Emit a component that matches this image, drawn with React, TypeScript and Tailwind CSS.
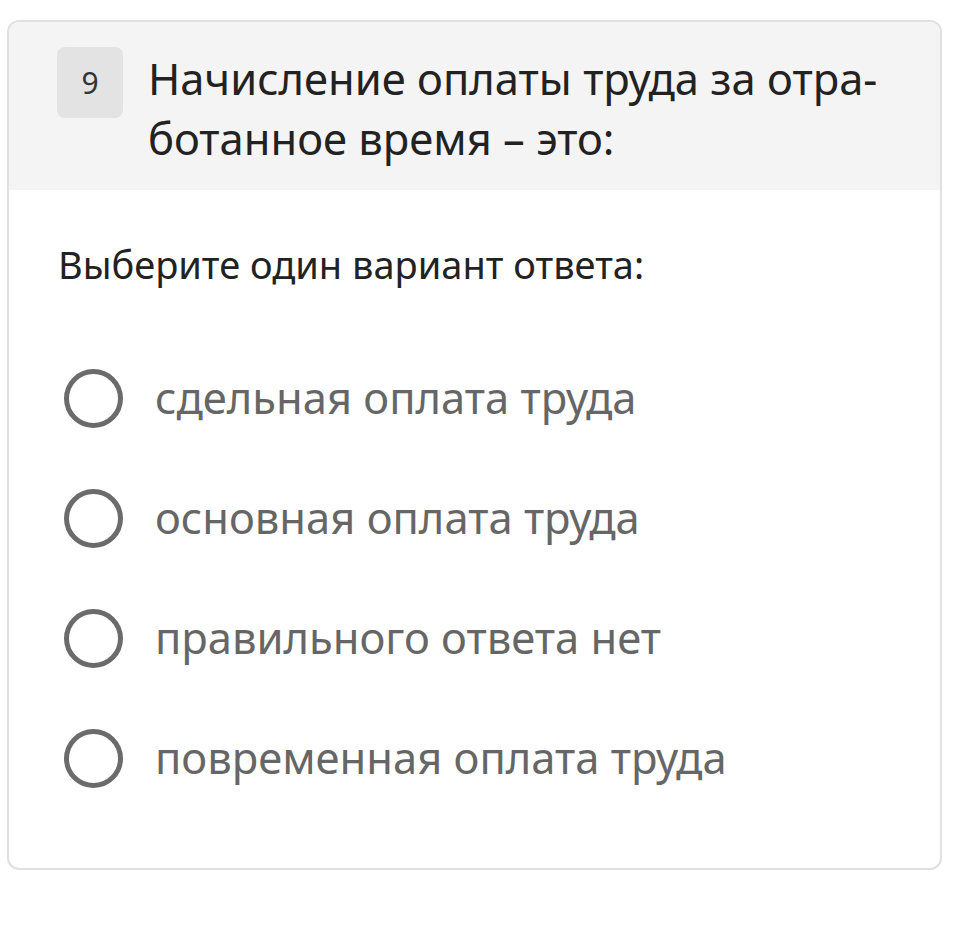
import React from "react";

const options = [
  "сдельная оплата труда",
  "основная оплата труда",
  "правильного ответа нет",
  "повременная оплата труда",
];

export default function App() {
  return (
    <div
      className="w-[959px] h-[931px] bg-white pt-[20px] pl-[7px]"
      style={{ fontFamily: '"Noto Sans", "Open Sans", sans-serif' }}
    >
      <div className="w-[935px] h-[850px] border-2 border-[#e0e0e0] rounded-[12px] overflow-hidden bg-white">
        <div className="bg-[#f4f4f4] h-[168px] flex items-start pl-[48px] pt-[25px]">
          <div className="w-[66px] h-[71px] rounded-[8px] bg-[#e3e3e3] flex items-center justify-center text-[30px] text-[#333]">
            9
          </div>
          <div className="ml-[25px] mt-[1px] text-[43.5px] leading-[60px] text-[#222] whitespace-nowrap">
            Начисление оплаты труда за отра-
            <br />
            ботанное время – это:
          </div>
        </div>
        <div className="pl-[49px]">
          <div className="h-[148px] flex items-center text-[38px] text-[#222] pt-[0px] whitespace-nowrap">
            Выберите один вариант ответа:
          </div>
          <div className="flex flex-col">
            {options.map((o) => (
              <div key={o} className="h-[120px] flex items-center">
                <div className="w-[59px] h-[59px] rounded-full border-[5px] border-[#6b6b6b] ml-[6px]" />
                <div className="ml-[32px] text-[43.5px] text-[#666] whitespace-nowrap">{o}</div>
              </div>
            ))}
          </div>
        </div>
      </div>
    </div>
  );
}
